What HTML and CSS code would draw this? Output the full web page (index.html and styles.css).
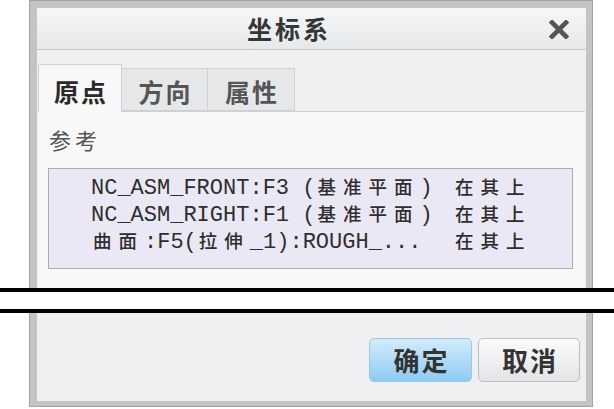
FILE: index.html
```html
<!DOCTYPE html>
<html lang="zh">
<head>
<meta charset="utf-8">
<title>坐标系</title>
<link rel="stylesheet" href="styles.css">
</head>
<body>
<div class="dialog dialog-top">
  <div class="inner">
    <div class="titlebar">
      <span class="title">坐标系</span>
      <span class="close">
        <svg width="20" height="19" viewBox="0 0 20 19"><path d="M3 2.5 L17 16.5 M17 2.5 L3 16.5" stroke="#555" stroke-width="4.6" stroke-linecap="square"/></svg>
      </span>
    </div>
    <div class="tabs">
      <div class="tab active">原点</div>
      <div class="tab">方向</div>
      <div class="tab">属性</div>
    </div>
    <div class="panel">
      <div class="label">参考</div>
      <div class="list">
        <div class="row"><span class="ref">NC_ASM_FRONT:F3 (<span class="cjk">基准平面</span>)</span><span class="cjk status">在其上</span></div>
        <div class="row"><span class="ref">NC_ASM_RIGHT:F1 (<span class="cjk">基准平面</span>)</span><span class="cjk status">在其上</span></div>
        <div class="row"><span class="ref"><span class="cjk">曲面</span>:F5(<span class="cjk">拉伸</span>_1):ROUGH_...</span><span class="cjk status">在其上</span></div>
      </div>
    </div>
  </div>
</div>
<div class="cut"></div>
<div class="dialog dialog-bottom">
  <div class="inner">
    <div class="buttons">
      <button class="btn primary">确定</button>
      <button class="btn">取消</button>
    </div>
  </div>
</div>
</body>
</html>
```
FILE: styles.css
```css
html, body {
  margin: 0;
  padding: 0;
  background: #fff;
}
body {
  width: 614px;
  height: 409px;
  overflow: hidden;
  font-family: "Noto Sans CJK SC", "Noto Sans", sans-serif;
  color: #333;
}
.dialog {
  margin-left: 29px;
  width: 564px;
  box-sizing: border-box;
  background: #c4c4c4;
  border: 1px solid #a2a2a2;
}
.dialog-top {
  height: 288px;
  border-bottom: none;
  padding: 7px 6px 0 7px;
}
.dialog-bottom {
  height: 94px;
  border-top: none;
  padding: 0 6px 5px 7px;
}
.inner {
  height: 100%;
  background: #eef0f2;
  display: flex;
  flex-direction: column;
  overflow: hidden;
}
.titlebar {
  height: 41px;
  flex: none;
  border-bottom: 1px solid #c6c7c9;
  background: linear-gradient(#f5f6f7, #e7e8ea);
  display: flex;
  align-items: center;
}
.title {
  width: 501px;
  text-align: center;
  font-size: 25px;
  font-weight: 700;
  letter-spacing: 3px;
  text-indent: 3px;
  color: #363636;
  line-height: 41px;
}
.close {
  flex: 1;
  display: flex;
  justify-content: center;
  padding-right: 6px;
  padding-top: 1px;
}
.close svg { display: block; filter: blur(0.3px); }
.tabs {
  flex: none;
  margin-top: 14px;
  margin-left: 1px;
  display: flex;
  align-items: flex-end;
  height: 47px;
  position: relative;
  z-index: 1;
}
.tab {
  box-sizing: border-box;
  height: 43px;
  width: 86px;
  background: #e6e7e9;
  border: 1px solid #cfd0d2;
  border-left: none;
  color: #555;
  font-size: 25px;
  font-weight: 700;
  letter-spacing: 2px;
  text-indent: 2px;
  display: flex;
  align-items: center;
  justify-content: center;
  padding-top: 2px;
}
.tab:last-child { width: 87px; }
.tab.active {
  height: 48px;
  width: 84px;
  margin-bottom: -1px;
  background: #f8f8f9;
  border: 1px solid #cfd0d2;
  border-bottom: none;
  border-radius: 2px 2px 0 0;
  color: #2a2a2a;
  padding-top: 4px;
}
.panel {
  flex: 1;
  margin: 0 1px;
  background: #f8f8f9;
  border-top: 1px solid #cfd0d2;
  padding: 12px 0 0 10px;
}
.label {
  font-size: 22px;
  letter-spacing: 4px;
  color: #555;
  line-height: 30px;
  margin-left: 1px;
}
.list {
  margin-top: 14px;
  width: 525px;
  height: 101px;
  box-sizing: border-box;
  border: 1px solid #acacb0;
  background: #ebe8f5;
  padding: 4px 0 0 42px;
}
.row {
  display: grid;
  grid-template-columns: 362px auto;
  height: 27px;
  line-height: 27px;
  font-family: "Liberation Mono", "Noto Sans CJK SC", monospace;
  font-size: 22px;
  color: #2e2e2e;
  white-space: nowrap;
}
.cjk {
  font-family: "Noto Sans CJK SC", sans-serif;
  font-size: 18.5px;
  font-weight: 500;
  letter-spacing: 7px;
  padding-left: 2px;
}
.cut {
  height: 25px;
  box-sizing: border-box;
  border-top: 4px solid #000;
  border-bottom: 4px solid #000;
  background: #fff;
}
.buttons {
  display: flex;
  justify-content: flex-end;
  gap: 6px;
  padding: 25px 6px 0 0;
}
.btn {
  width: 102px;
  height: 44px;
  box-sizing: border-box;
  border: 1px solid #bdbdbd;
  border-radius: 5px;
  background: linear-gradient(#fbfbfb, #e3e4e6);
  font-family: "Noto Sans CJK SC", sans-serif;
  font-size: 26px;
  font-weight: 700;
  letter-spacing: 2px;
  text-indent: 2px;
  color: #333;
  padding: 0;
  line-height: 40px;
}
.btn.primary {
  width: 103px;
  border-color: #9dc7e6;
  background: linear-gradient(#d3ebfb, #8ecbf2);
}
```
